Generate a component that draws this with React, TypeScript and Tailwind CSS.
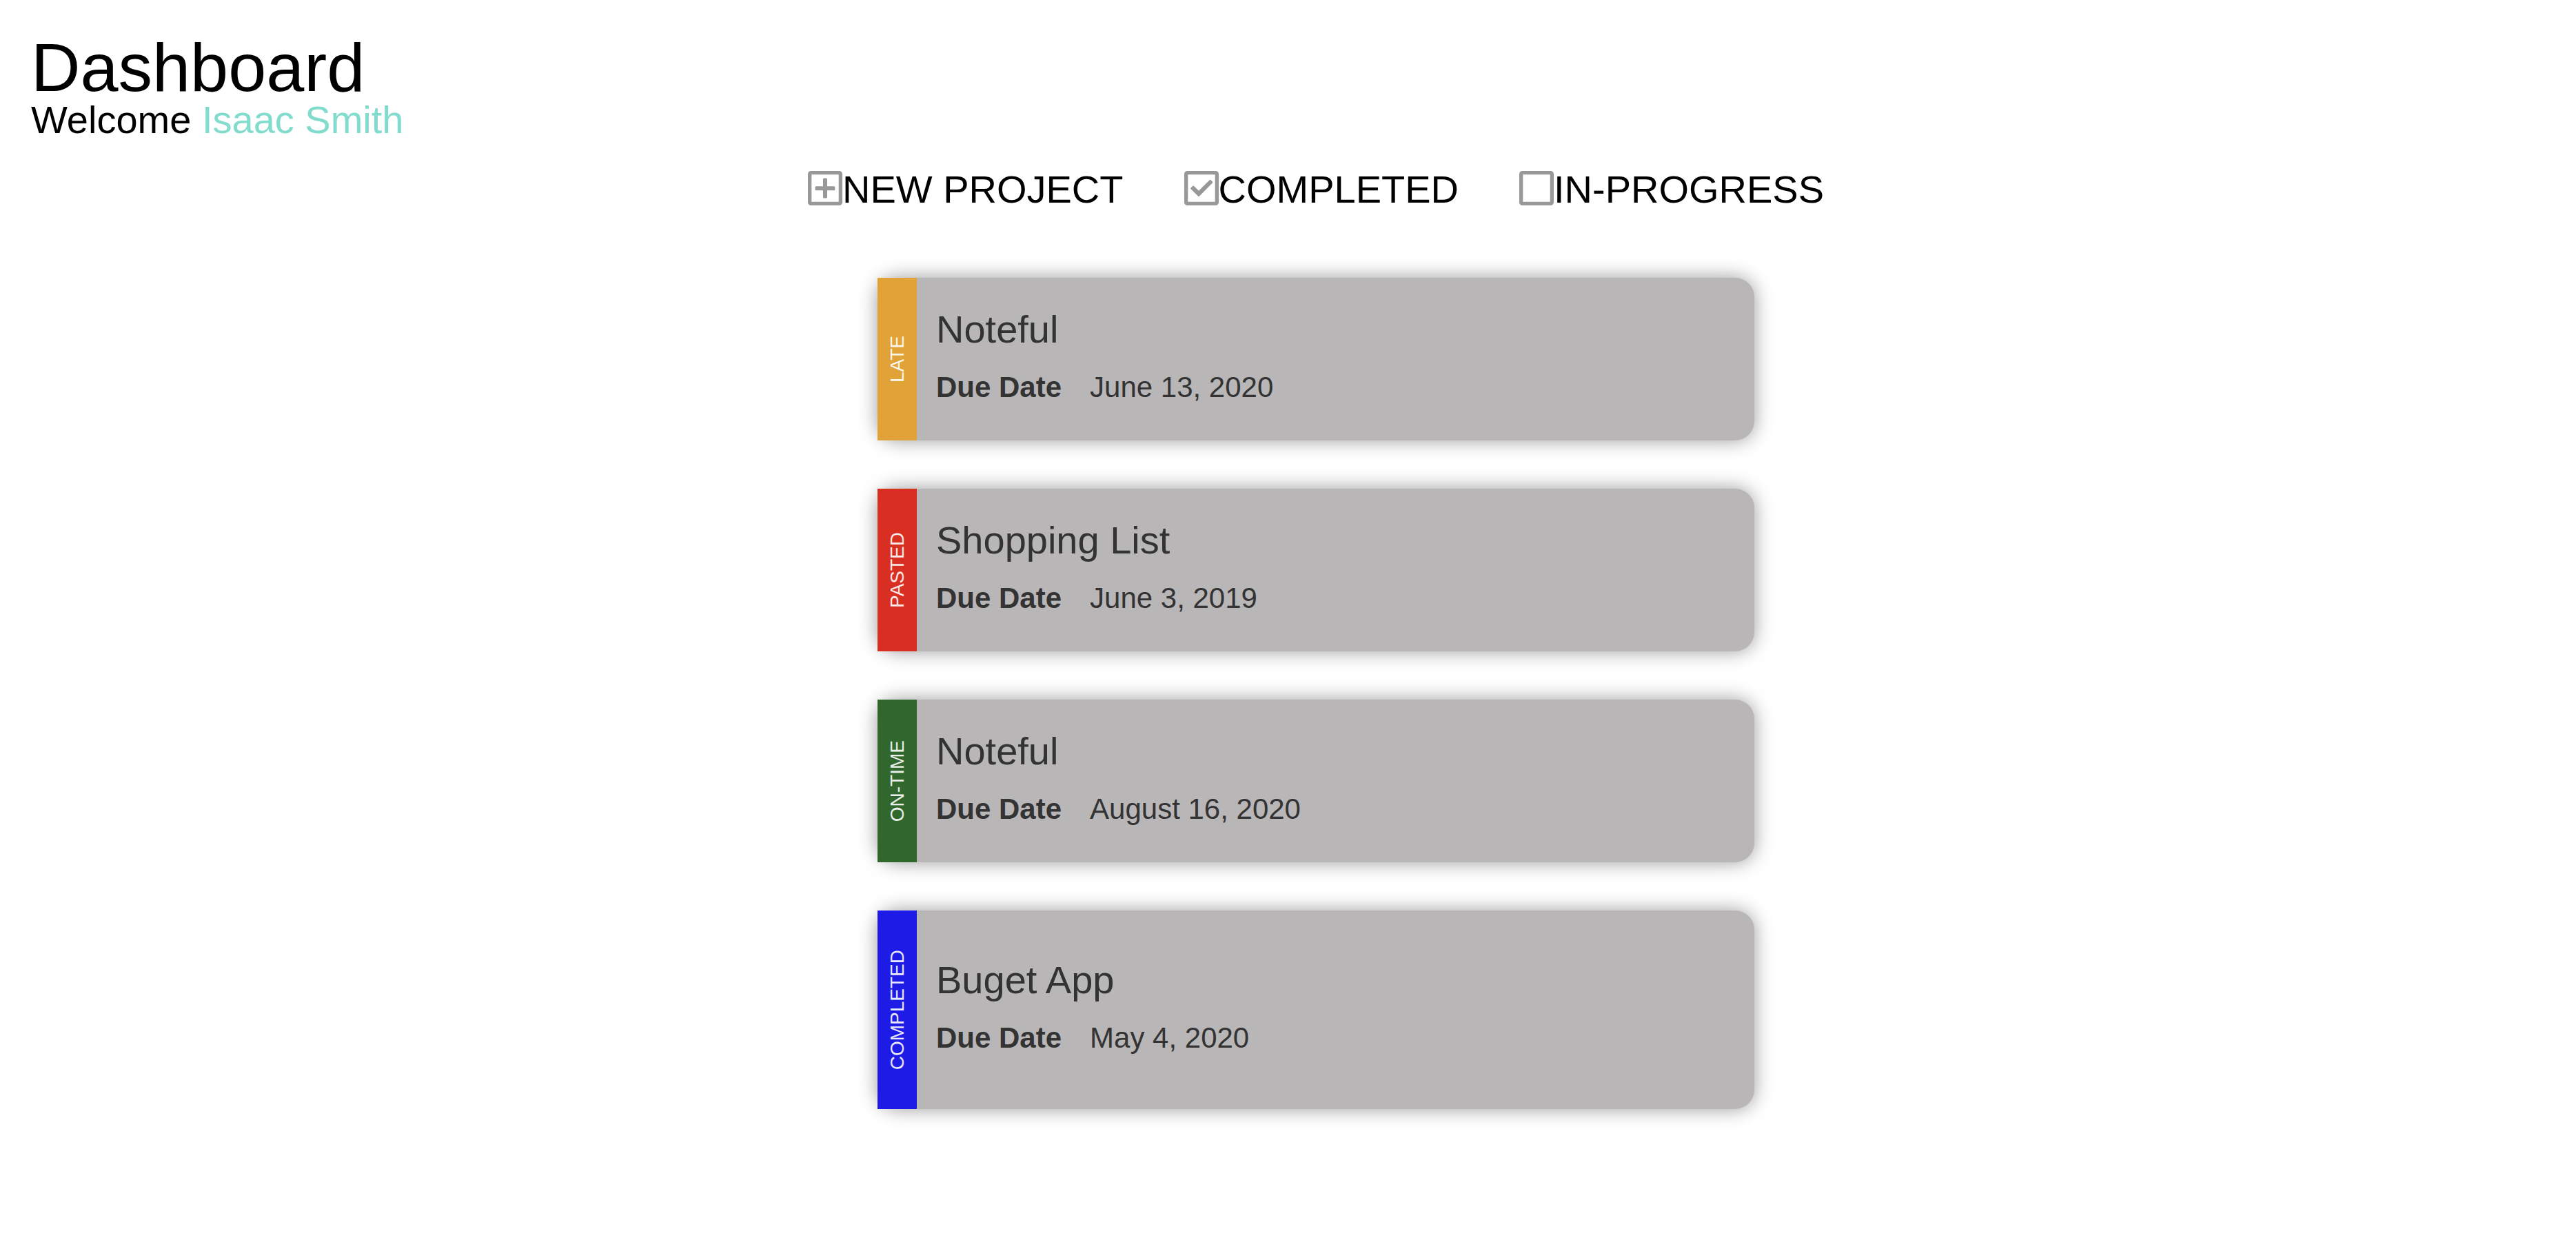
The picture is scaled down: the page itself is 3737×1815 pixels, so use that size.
import type { ReactNode } from 'react';

type Project = {
  title: string;
  due: string;
  status: string;
  color: string;
};

const projects: Project[] = [
  { title: 'Noteful', due: 'June 13, 2020', status: 'LATE', color: 'bg-[#e1a238]' },
  { title: 'Shopping List', due: 'June 3, 2019', status: 'PASTED', color: 'bg-[#d92f23]' },
  { title: 'Noteful', due: 'August 16, 2020', status: 'ON-TIME', color: 'bg-[#31672d]' },
  { title: 'Buget App', due: 'May 4, 2020', status: 'COMPLETED', color: 'bg-[#1e1be6]' },
];

function BoxIcon({ children }: { children?: ReactNode }) {
  return (
    <svg viewBox="0 0 50 50" className="size-[50px] shrink-0 text-[#999797]" fill="currentColor" aria-hidden="true">
      <path
        fillRule="evenodd"
        d="M4.5 0h41A4.5 4.5 0 0 1 50 4.5v41a4.5 4.5 0 0 1-4.5 4.5h-41A4.5 4.5 0 0 1 0 45.5v-41A4.5 4.5 0 0 1 4.5 0ZM5.3 5.3v39.4h39.4V5.3Z"
      />
      {children}
    </svg>
  );
}

function Action({ label, children }: { label: string; children?: ReactNode }) {
  return (
    <button type="button" className="flex cursor-pointer items-start text-[56px] leading-[54px] whitespace-nowrap">
      <BoxIcon>{children}</BoxIcon>
      {label}
    </button>
  );
}

function ProjectCard({ title, due, status, color }: Project) {
  return (
    <li className="flex rounded-[28px] bg-[#b8b6b7] text-[#333] shadow-[0_0_28px_rgba(0,0,0,0.4)]">
      <div className={`flex w-[57px] shrink-0 items-center justify-center py-[57px] ${color}`}>
        <span className="rotate-180 text-[28px] leading-8 whitespace-nowrap text-white/90 [writing-mode:vertical-rl]">
          {status}
        </span>
      </div>
      <div className="flex flex-col justify-center gap-[22px] px-7 py-[45px]">
        <h2 className="text-[56px] leading-[60px]">{title}</h2>
        <dl className="flex gap-[41px] text-[42px] leading-[64px]">
          <dt className="font-bold">Due Date</dt>
          <dd>{due}</dd>
        </dl>
      </div>
    </li>
  );
}

export default function App() {
  return (
    <div className="min-h-screen bg-white font-['Liberation_Sans',Arial,sans-serif] text-black">
      <header className="px-[45px] pt-12">
        <h1 className="text-[99px] leading-[100px]">Dashboard</h1>
        <p className="text-[56px] leading-[52px]">
          Welcome <span className="text-[#82dccd]">Isaac Smith</span>
        </p>
      </header>
      <main className="flex flex-col items-center pt-12 pb-24 pl-[81px]">
        <nav aria-label="Projects" className="flex flex-wrap justify-center gap-x-[88px] gap-y-6">
          <Action label="NEW PROJECT">
            <path d="M23.5 10.6h3a1.5 1.5 0 0 1 1.5 1.5V22.3h9.8a1.5 1.5 0 0 1 1.5 1.5v3a1.5 1.5 0 0 1-1.5 1.5H28v9.8a1.5 1.5 0 0 1-1.5 1.5h-3a1.5 1.5 0 0 1-1.5-1.5v-9.8H12a1.5 1.5 0 0 1-1.5-1.5v-3a1.5 1.5 0 0 1 1.5-1.5H22V12.1a1.5 1.5 0 0 1 1.5-1.5Z" />
          </Action>
          <Action label="COMPLETED">
            <path d="M9.6 24.4 12.4 21.8Q13.3 21 14.2 21.9L21 28.7 36.7 13.2Q37.6 12.3 38.5 13.2L40.9 15.6Q41.7 16.5 40.8 17.4L21.8 36.7Q21 37.5 20.2 36.7L9.6 26.2Q8.7 25.3 9.6 24.4Z" />
          </Action>
          <Action label="IN-PROGRESS" />
        </nav>
        <ul className="mt-[101px] flex w-full max-w-[1272px] flex-col gap-[70px]">
          {projects.map((project) => (
            <ProjectCard key={project.status} {...project} />
          ))}
        </ul>
      </main>
    </div>
  );
}
